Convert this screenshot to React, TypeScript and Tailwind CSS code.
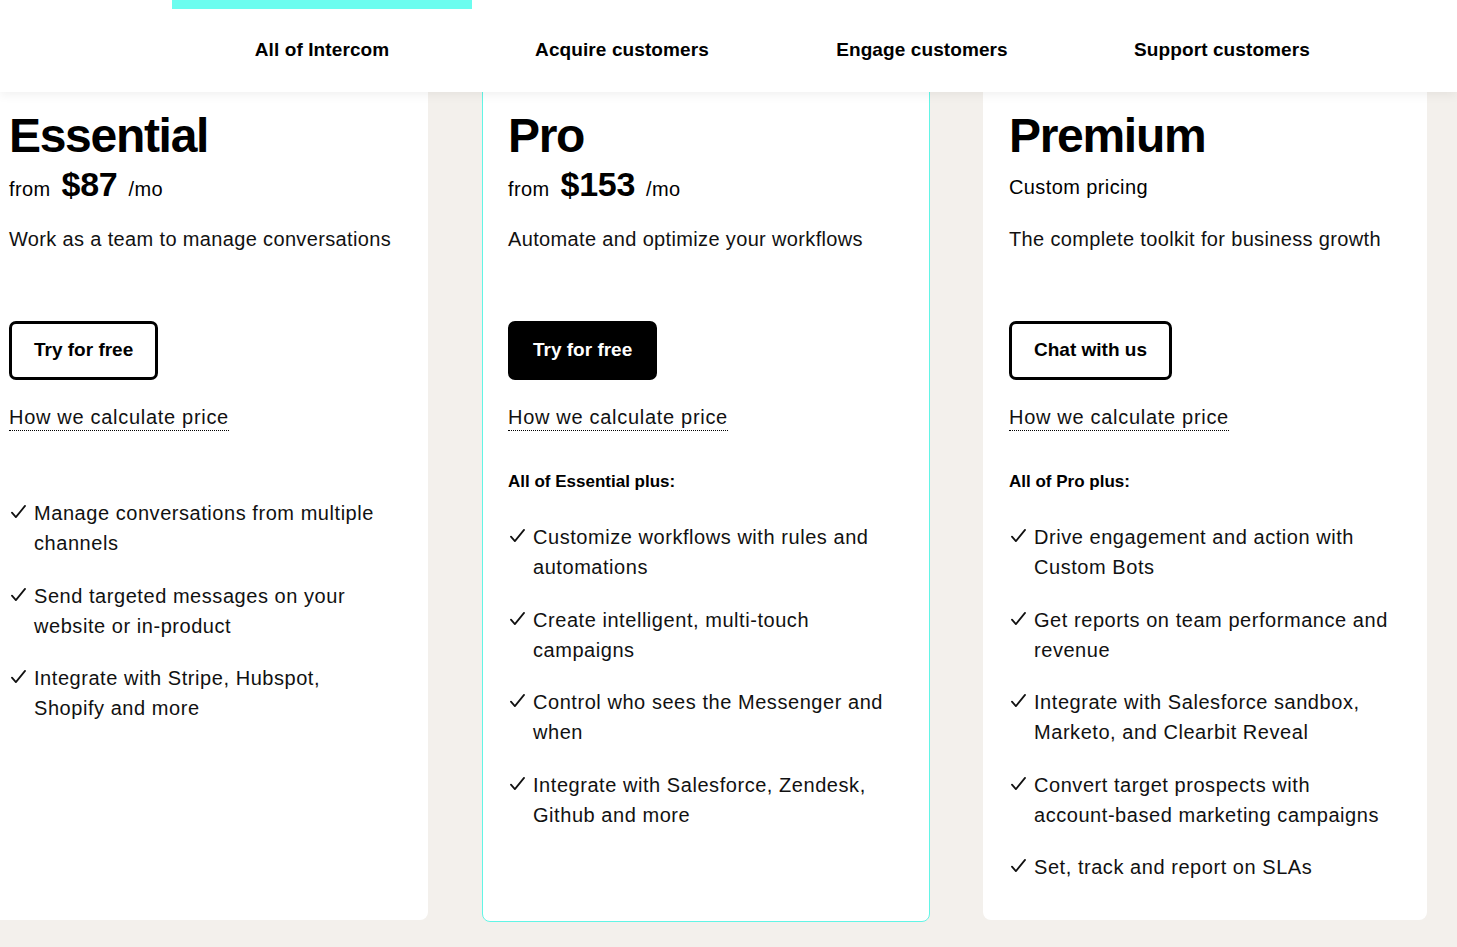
import { ReactNode } from "react";

const tabs = ["All of Intercom", "Acquire customers", "Engage customers", "Support customers"];

interface Plan {
  name: string;
  price?: string;
  custom?: string;
  blurb: string;
  cta: string;
  featured?: boolean;
  plusLabel?: string;
  features: string[];
  cardClass: string;
}

const plans: Plan[] = [
  {
    name: "Essential",
    price: "$87",
    blurb: "Work as a team to manage conversations",
    cta: "Try for free",
    features: [
      "Manage conversations from multiple channels",
      "Send targeted messages on your website or in-product",
      "Integrate with Stripe, Hubspot, Shopify and more",
    ],
    cardClass: "ml-[-17px] w-[445px] pt-[38px] pl-[26px]",
  },
  {
    name: "Pro",
    price: "$153",
    blurb: "Automate and optimize your workflows",
    cta: "Try for free",
    featured: true,
    plusLabel: "All of Essential plus:",
    features: [
      "Customize workflows with rules and automations",
      "Create intelligent, multi-touch campaigns",
      "Control who sees the Messenger and when",
      "Integrate with Salesforce, Zendesk, Github and more",
    ],
    cardClass: "ml-[54px] w-[448px] mb-[-2px] pt-[37px] pl-[25px] border border-[#62f5e6]",
  },
  {
    name: "Premium",
    custom: "Custom pricing",
    blurb: "The complete toolkit for business growth",
    cta: "Chat with us",
    plusLabel: "All of Pro plus:",
    features: [
      "Drive engagement and action with Custom Bots",
      "Get reports on team performance and revenue",
      "Integrate with Salesforce sandbox, Marketo, and Clearbit Reveal",
      "Convert target prospects with account-based marketing campaigns",
      "Set, track and report on SLAs",
    ],
    cardClass: "ml-[53px] w-[444px] pt-[38px] pl-[26px]",
  },
];

function Check() {
  return (
    <svg viewBox="0 0 16 15" className="w-[15px] h-[14px] mt-[7px] shrink-0" fill="none">
      <path d="M1 8.2 L5.2 13 L15 1" stroke="#111" strokeWidth="1.9" strokeLinecap="round" strokeLinejoin="round" />
    </svg>
  );
}

function Feature({ children }: { children: ReactNode }) {
  return (
    <li className="flex gap-[8px] pl-[2px]">
      <Check />
      <span className="max-w-[358px] text-[20px] leading-[30px] tracking-[0.55px] text-[#111]">{children}</span>
    </li>
  );
}

function PlanCard({ plan }: { plan: Plan }) {
  return (
    <div className={`bg-white rounded-b-[8px] pr-[20px] pb-[38px] ${plan.cardClass}`}>
      <h2 className="text-[48px] leading-[52px] font-bold tracking-[-1.3px] text-black">{plan.name}</h2>
      {plan.price ? (
        <div className="mt-[2px] h-[40px] flex items-baseline gap-[11px] leading-[40px]">
          <span className="text-[20px] tracking-[0.4px]">from</span>
          <span className="text-[34px] font-bold tracking-[-0.3px]">{plan.price}</span>
          <span className="text-[20px] tracking-[0.4px]">/mo</span>
        </div>
      ) : (
        <div className="mt-[2px] h-[40px] pt-[5px] flex items-center text-[20px] tracking-[0.4px]">{plan.custom}</div>
      )}
      <p className="mt-[20px] text-[20px] leading-[30px] tracking-[0.35px] text-[#111]">{plan.blurb}</p>
      <button
        className={`mt-[67px] h-[59px] px-[22px] rounded-[7px] border-[3px] border-black text-[19px] font-bold ${
          plan.featured ? "bg-black text-white" : "bg-white text-black"
        }`}
      >
        {plan.cta}
      </button>
      <div className="mt-[25px]">
        <a className="inline-block text-[20px] leading-[25px] tracking-[0.7px] text-[#111] border-b border-dotted border-black">
          How we calculate price
        </a>
      </div>
      {plan.plusLabel ? (
        <>
          <p className="mt-[39px] text-[17px] leading-[24px] font-bold text-black">{plan.plusLabel}</p>
          <ul className="mt-[28px] flex flex-col gap-[22.5px]">
            {plan.features.map((f) => (
              <Feature key={f}>{f}</Feature>
            ))}
          </ul>
        </>
      ) : (
        <ul className="mt-[67px] flex flex-col gap-[22.5px]">
          {plan.features.map((f) => (
            <Feature key={f}>{f}</Feature>
          ))}
        </ul>
      )}
    </div>
  );
}

export default function App() {
  return (
    <div className="min-h-[947px] bg-[#f3f0ec] overflow-hidden font-['Liberation_Sans',Arial,sans-serif] text-black">
      <nav className="relative z-10 h-[92px] bg-white shadow-[0_3px_10px_rgba(0,0,0,0.06)] flex pl-[172px]">
        {tabs.map((t, i) => (
          <div key={t} className="relative w-[300px] flex items-center justify-center">
            {i === 0 && <div className="absolute top-0 left-0 right-0 h-[9px] bg-[#6cfdef]" />}
            <span className="text-[19px] font-bold tracking-[0.1px] mt-[8px]">{t}</span>
          </div>
        ))}
      </nav>
      <div className="flex items-stretch mt-[-20px]">
        {plans.map((p) => (
          <PlanCard key={p.name} plan={p} />
        ))}
      </div>
    </div>
  );
}
